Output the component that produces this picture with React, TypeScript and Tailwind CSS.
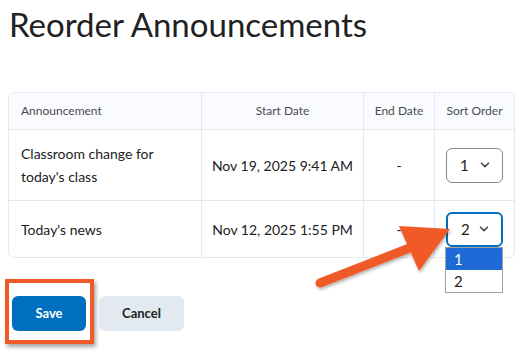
import React from "react";

function Chevron() {
  return (
    <svg width="10" height="6" viewBox="0 0 10 6" fill="none">
      <path d="M1.5 1.2 L5 4.6 L8.5 1.2" stroke="#494c4e" strokeWidth="1.6" strokeLinecap="round" strokeLinejoin="round" />
    </svg>
  );
}

function Select({ value, focused }: { value: string; focused?: boolean }) {
  return (
    <div
      className={
        "flex h-[35px] w-[57px] items-center justify-between rounded-[6px] bg-white pl-[13px] pr-[12px] text-[15px] text-[#202122] " +
        (focused ? "border-2 border-[#006fbf] pl-[12px]" : "border border-[#868c8f]")
      }
    >
      <span>{value}</span>
      <Chevron />
    </div>
  );
}

export default function App() {
  const font = { fontFamily: "Lato, 'Noto Sans', sans-serif" };
  return (
    <div className="relative h-[360px] w-[525px] overflow-hidden bg-white" style={font}>
      <div className="pl-[9px] pt-[4px]">
        <h1 className="text-[33px] leading-[40px] text-[#202122]">Reorder Announcements</h1>
      </div>

      <div className="ml-[8px] mt-[48px] w-[507px] overflow-hidden rounded-[6px] border border-[#e3e9f1]">
        <div className="grid grid-cols-[192px_162px_71px_80px] text-[#202122]">
          {/* header */}
          <div className="flex h-[37px] items-center border-b border-[#e3e9f1] bg-[#f9fbff] pl-[12px] text-[12px] text-[#494c4e]">Announcement</div>
          <div className="flex h-[37px] items-center justify-center border-b border-l border-[#e3e9f1] bg-[#f9fbff] text-[12px] text-[#494c4e]">Start Date</div>
          <div className="flex h-[37px] items-center justify-center border-b border-l border-[#e3e9f1] bg-[#f9fbff] text-[12px] text-[#494c4e]">End Date</div>
          <div className="flex h-[37px] items-center justify-center border-b border-l border-[#e3e9f1] bg-[#f9fbff] text-[12px] text-[#494c4e]">Sort Order</div>

          {/* row 1 */}
          <div className="flex h-[71px] items-center border-b border-[#e3e9f1] pl-[12px] text-[14px] leading-[23px]">
            <span>Classroom change for<br />today's class</span>
          </div>
          <div className="flex h-[71px] items-center justify-center border-b border-l border-[#e3e9f1] text-[14px]">Nov 19, 2025 9:41 AM</div>
          <div className="flex h-[71px] items-center justify-center border-b border-l border-[#e3e9f1] text-[14px]">-</div>
          <div className="flex h-[71px] items-center border-b border-l border-[#e3e9f1] pl-[11px]">
            <Select value="1" />
          </div>

          {/* row 2 */}
          <div className="flex h-[56px] items-center pl-[12px] text-[14px]">Today's news</div>
          <div className="flex h-[56px] items-center justify-center border-l border-[#e3e9f1] text-[14px]">Nov 12, 2025 1:55 PM</div>
          <div className="flex h-[56px] items-center justify-center border-l border-[#e3e9f1] text-[14px]">-</div>
          <div className="flex h-[56px] items-center border-l border-[#e3e9f1] pl-[11px]">
            <Select value="2" focused />
          </div>
        </div>
      </div>

      <div className="mt-[21px] flex items-start pl-[5px]">
        <div className="border-[4px] border-[#f05a28] pb-[9px] pl-[3px] pr-[4px] pt-[13px] shadow-[2px_3px_4px_rgba(0,0,0,0.35)]">
          <button className="h-[35px] w-[74px] rounded-[6px] bg-[#006fbf] text-[13px] font-bold text-white">Save</button>
        </div>
        <button className="ml-[5px] mt-[17px] h-[35px] w-[85px] rounded-[6px] bg-[#e3e9f1] text-[13px] font-bold text-[#202122]">Cancel</button>
      </div>

      {/* dropdown list */}
      <div className="absolute left-[445px] top-[247px] w-[58px] border border-[#a0a0a0] bg-white text-[15px] leading-[22px] text-[#202122]">
        <div className="bg-[#1e6ad6] pl-[8px] text-white">1</div>
        <div className="pl-[8px]">2</div>
      </div>

      {/* annotation arrow */}
      <svg className="pointer-events-none absolute left-0 top-0" width="525" height="360" viewBox="0 0 525 360">
        <defs>
          <filter id="sh" x="-20%" y="-20%" width="140%" height="140%">
            <feDropShadow dx="1" dy="2" stdDeviation="1.5" floodColor="#000" floodOpacity="0.3" />
          </filter>
        </defs>
        <g filter="url(#sh)">
          <line x1="320" y1="283" x2="412" y2="247" stroke="#f05a28" strokeWidth="9" strokeLinecap="round" />
          <polygon points="450,229 399,226 419,271" fill="#f05a28" />
        </g>
      </svg>
    </div>
  );
}
